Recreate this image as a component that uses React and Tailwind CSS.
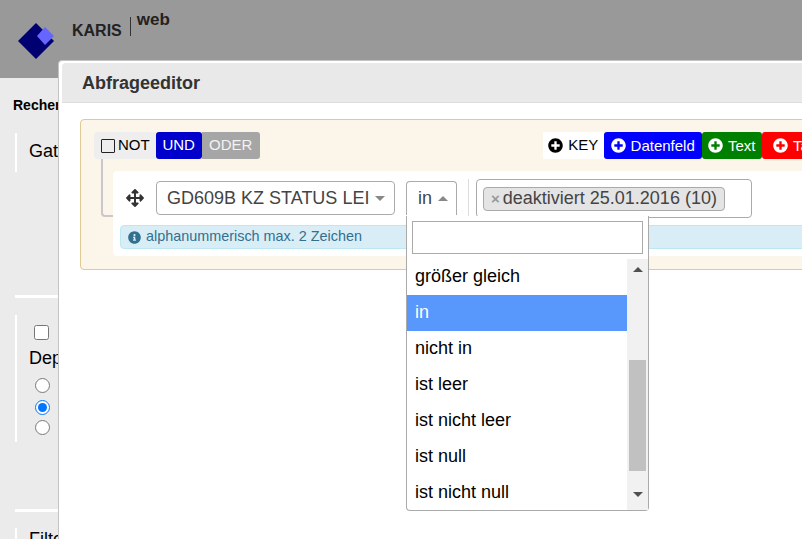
import React from "react";
import { FaArrowsAlt, FaPlusCircle, FaInfoCircle } from "react-icons/fa";

const options = [
  ["größer gleich", false],
  ["in", true],
  ["nicht in", false],
  ["ist leer", false],
  ["ist nicht leer", false],
  ["ist null", false],
  ["ist nicht null", false],
];

function Logo() {
  return (
    <svg width="40" height="40" viewBox="0 0 40 40" className="shrink-0">
      <polygon points="18,0 0,18 18,36 36,18" fill="#000070" />
      <polygon points="27,4 36,13 27,22 19,13" fill="#6666ff" />
    </svg>
  );
}

function AddButton({ label, bg, w }) {
  return (
    <button className={`flex h-[27px] shrink-0 items-center justify-center gap-[5px] rounded-[3px] text-[15px] leading-none text-white ${bg} ${w}`}>
      <FaPlusCircle className="h-[15px] w-[15px] shrink-0 text-white" />
      {label}
    </button>
  );
}

function Sidebar() {
  return (
    <div className="flex flex-col pl-[13px] text-black">
      <div className="mt-[19px] h-4 text-[14px] font-bold leading-4">Recherche</div>
      <div className="ml-[2px] mt-5 flex h-[39px] items-center border-l-2 border-white pb-[3px] pl-3 text-[18px]">Gatter</div>
      <div className="ml-[2px] mt-[123px] h-[3px] w-[44px] bg-white" />
      <div className="ml-[2px] mt-[17px] flex h-[127px] flex-col border-l-2 border-white pl-[17px]">
        <input type="checkbox" className="mt-[10px] h-[15px] w-[15px]" />
        <div className="-ml-[5px] mt-[7px] text-[18px] leading-[22px]">Depot</div>
        <div className="ml-px mt-[9px] flex flex-col">
          <input type="radio" name="dep" className="h-[15px] w-[15px]" />
          <input type="radio" name="dep" defaultChecked className="mt-[7px] h-[15px] w-[15px]" />
          <input type="radio" name="dep" className="mt-[5px] h-[15px] w-[15px]" />
        </div>
      </div>
      <div className="ml-[2px] mt-[67px] h-[3px] w-[44px] bg-white" />
      <div className="ml-[2px] mt-[16px] border-l-2 border-white pl-3 text-[18px] leading-[22px]">Filter</div>
    </div>
  );
}

function Dropdown() {
  return (
    <div className="absolute left-[293px] top-[45px] z-10 w-[243px] rounded-b-[4px] border border-t-0 border-[#aaa] bg-white">
      <div className="p-[5px]">
        <input className="block h-[33px] w-[231px] border border-[#aaa] bg-white outline-none" />
      </div>
      <div className="flex h-[251px]">
        <ul className="flex-1">
          {options.map(([label, active]) => (
            <li
              key={label}
              className={`flex h-9 items-center px-2 pb-[2px] text-[18px] ${active ? "bg-[#5897fb] text-white" : "text-black"}`}
            >
              {label}
            </li>
          ))}
        </ul>
        <div className="flex w-[21px] flex-col items-center bg-[#f1f1f1] py-[8px]">
          <span className="h-0 w-0 border-x-[5px] border-b-[5px] border-x-transparent border-b-[#505050]" />
          <span className="mt-[88px] h-[111px] w-[17px] bg-[#c1c1c1]" />
          <span className="mt-[21px] h-0 w-0 border-x-[5px] border-t-[5px] border-x-transparent border-t-[#505050]" />
        </div>
      </div>
    </div>
  );
}

function Rule() {
  return (
    <div className="relative ml-[19px] mt-3 h-[85px] w-[760px] rounded-[4px] bg-white">
      <div className="flex h-[54px] items-center text-[#444]">
        <FaArrowsAlt className="ml-[13px] h-[18px] w-[18px] shrink-0 text-[#333]" />
        <div className="ml-[12px] flex h-[34px] w-[239px] items-center justify-between rounded-[4px] border border-[#aaa] pl-[10px] pr-[9px] text-[18px]">
          <span className="whitespace-nowrap">GD609B KZ STATUS LEI</span>
          <span className="h-0 w-0 border-x-[5px] border-t-[5px] border-x-transparent border-t-[#888]" />
        </div>
        <div className="ml-[11px] flex h-[34px] w-[51px] items-center gap-[6px] rounded-t-[4px] border border-b-0 border-[#aaa] pl-[11px] text-[18px]">
          in
          <span className="h-0 w-0 border-x-[5px] border-b-[5px] border-x-transparent border-b-[#888]" />
        </div>
        <div className="ml-[11px] h-[39px] w-px bg-[#ddd]" />
        <div className="ml-[7px] flex h-[39px] w-[276px] items-start rounded-[4px] border border-[#aaa] pl-[6px] pt-[7px]">
          <div className="flex h-[24px] w-[242px] items-center rounded-[4px] border border-[#aaa] bg-[#e4e4e4] pl-[7px] text-[18px]">
            <span className="mr-[3px] text-[15px] font-bold leading-none text-[#999]">×</span>
            <span className="whitespace-nowrap">deaktiviert 25.01.2016 (10)</span>
          </div>
        </div>
      </div>
      <div className="ml-[7px] flex h-[24px] items-center gap-[5px] rounded-[4px] border border-[#bce8f1] bg-[#d9edf7] pl-[7px] text-[14.4px] text-[#31708f]">
        <FaInfoCircle className="h-[13px] w-[13px]" />
        alphanummerisch max. 2 Zeichen
      </div>
      <Dropdown />
    </div>
  );
}

function Panel() {
  return (
    <div className="relative ml-[18px] mt-4 h-[151px] w-[800px] rounded-[4px] border border-[#dfc995] bg-[#fcf5e9] pl-[13px] pt-3">
      <div className="flex h-[27px] items-stretch">
        <div className="flex items-center rounded-l-[4px] bg-[#eeeeee] pl-[7px] pr-[6px] text-[15px] text-black">
          <span className="mr-[3px] h-[14px] w-[14px] rounded-[1px] border-[1.5px] border-[#222]" />
          NOT
        </div>
        <button className="w-[46px] rounded-[3px] bg-[#0000cc] text-[15px] text-white">UND</button>
        <button className="w-[58px] rounded-r-[3px] bg-[#a6a6a6] text-[15px] text-[#f2f2f2]">ODER</button>
        <div className="ml-[283px] flex">
          <button className="flex w-[61px] shrink-0 items-center justify-center gap-[5px] bg-white text-[15px] text-black">
            <FaPlusCircle className="h-[15px] w-[15px]" />
            KEY
          </button>
          <AddButton label="Datenfeld" bg="bg-[#0000ff]" w="w-[98px]" />
          <AddButton label="Text" bg="bg-[#008000]" w="w-[60px]" />
          <AddButton label="Tabelle" bg="bg-[#ff0000]" w="w-[90px]" />
        </div>
      </div>
      <div className="absolute left-[20px] top-[39px] h-[58px] w-[13px] rounded-bl-[4px] border-b-2 border-l-2 border-[#c8c8c8]" />
      <Rule />
    </div>
  );
}

export default function App() {
  return (
    <div
      className="relative h-[539px] w-[802px] overflow-hidden bg-[#ebebeb]"
      style={{ fontFamily: '"Liberation Sans", Arial, sans-serif' }}
    >
      <header className="flex h-[78px] items-start bg-[#999999] pl-[18px] pt-[23px] text-[#222]">
        <Logo />
        <span className="ml-[14px] mt-[-1px] text-[16px] font-bold leading-[18px]">KARIS</span>
        <span className="ml-[8px] mt-[-6px] h-[19px] w-px bg-[#333]" />
        <span className="ml-[6px] mt-[-13px] text-[17px] font-bold leading-[20px]">web</span>
      </header>
      <Sidebar />
      <div className="absolute left-[58px] top-[60px] h-[600px] w-[800px] rounded-tl-[4px] border border-[#c4c4c4] bg-white pl-[3px] pt-[2px]">
        <div className="flex h-[40px] items-center rounded-t-[4px] border-b border-[#ddd] bg-[#e9e9e9] pl-5 pt-[2px] text-[18px] font-bold text-[#333]">
          Abfrageeditor
        </div>
        <Panel />
      </div>
    </div>
  );
}
